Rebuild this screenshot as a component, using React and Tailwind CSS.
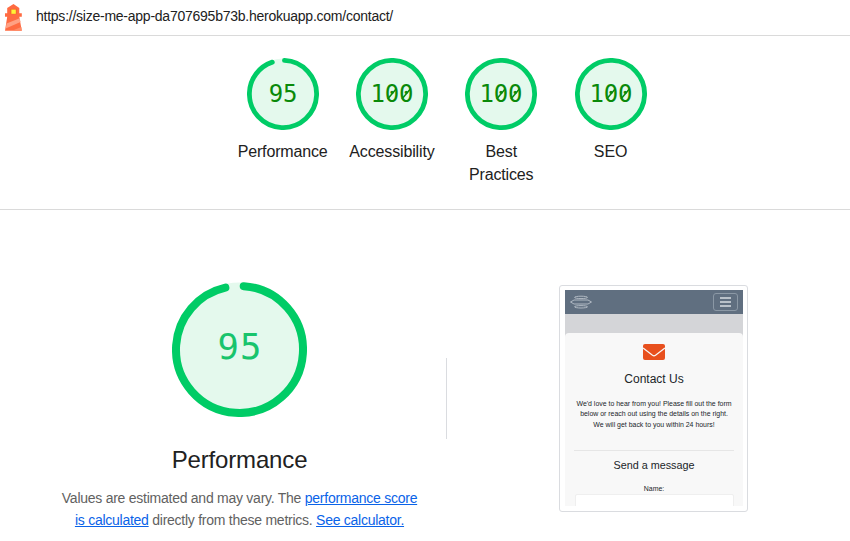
import React from "react";

function Gauge({ score, size, stroke, fontSize, color, baseline, spacing, start, sweep }) {
  const c = size / 2;
  const r = c - stroke / 2;
  const len = 2 * Math.PI * r;
  const full = score === 100;
  const arc = full ? len : len * sweep;
  const adv = fontSize * 0.602 + spacing;
  return (
    <svg width={size} height={size} viewBox={`0 0 ${size} ${size}`} className="block shrink-0">
      <circle cx={c} cy={c} r={c - 0.4} fill="#e4f9ed" />
      <circle
        cx={c}
        cy={c}
        r={r}
        fill="none"
        stroke="#00cc66"
        strokeWidth={stroke}
        strokeLinecap={full ? "butt" : "round"}
        strokeDasharray={full ? undefined : `${arc} ${len}`}
        transform={`rotate(${start} ${c} ${c})`}
      />
      <text
        x={c + spacing / 2}
        y={baseline}
        textAnchor="middle"
        fill={color}
        fontSize={fontSize}
        letterSpacing={spacing}
        fontFamily="'DejaVu Sans Mono', monospace"
      >
        {score}
      </text>
      {full &&
        [0, adv].map((dx) => (
          <line
            key={dx}
            x1={c + dx - 4.3}
            y1={baseline - 3.4}
            x2={c + dx + 4.3}
            y2={baseline - 13.6}
            stroke={color}
            strokeWidth="1.5"
          />
        ))}
    </svg>
  );
}

function SmallGauge({ score, label }) {
  return (
    <div className="flex w-[109.3px] flex-col items-center">
      <Gauge score={score} size={72} stroke={4.8} fontSize={24} color="#0a8a0a" baseline={44.3} spacing={-0.2} start={-87.5} sweep={0.94} />
      <div className="mt-[10px] w-[92px] text-center text-[16px] leading-[23px] tracking-[-0.15px] whitespace-nowrap">{label}</div>
    </div>
  );
}

function Lighthouse() {
  return (
    <svg width="18" height="28" viewBox="0 0 18 28" className="block shrink-0">
      <path d="M9.5 0 L15.3 4 V9.2 H17.8 V12.8 H15.3 L17.8 26.8 H1 L3.2 12.8 H1 V9.2 H3.2 V4Z" fill="#ff6b42" />
      <path d="M2.6 19.6 L15.7 14.2 L16.5 18 L1.7 24.5Z" fill="#ffa184" />
      <path d="M8 26.8 L17.3 23 L17.8 26.8Z" fill="#ff8c69" />
      <rect x="6.2" y="4.8" width="6.6" height="5.4" fill="#f2682c" />
      <rect x="7.4" y="5.6" width="4.4" height="4.2" fill="#fff236" />
    </svg>
  );
}

function Preview() {
  return (
    <div className="mt-[75px] h-[227px] w-[189px] rounded-[3px] border border-[#dadce0] px-[5px] pt-[4px]">
      <div className="flex h-[216px] w-[178px] flex-col overflow-hidden bg-[#d4d5d8]">
        <div className="flex h-[24px] shrink-0 items-center justify-between bg-[#606f80] pr-[5px] pl-[5px]">
          <svg width="22" height="14" viewBox="0 0 22 14" fill="none" stroke="#b9c1c9" strokeWidth="0.9">
            <ellipse cx="11" cy="2.4" rx="6.5" ry="1.2" />
            <path d="M0.5 7 L4 5 H18 L21.5 7 L18 9 H4Z" />
            <ellipse cx="11" cy="11.8" rx="6.5" ry="1.2" />
          </svg>
          <div className="flex h-[18px] w-[25px] flex-col items-center justify-center gap-[2.5px] rounded-[3px] border border-[#8b98a5]">
            <div className="h-[1.5px] w-[11px] bg-[#b9c1c9]" />
            <div className="h-[1.5px] w-[11px] bg-[#b9c1c9]" />
            <div className="h-[1.5px] w-[11px] bg-[#b9c1c9]" />
          </div>
        </div>
        <div className="mt-[19px] flex h-[173px] flex-col items-center rounded-t-[4px] bg-[#f8f8f8] text-center text-[#212529]">
          <svg width="22" height="16" viewBox="0 0 22 16" className="mt-[11px] block shrink-0">
            <rect width="22" height="16" rx="2" fill="#e8501e" />
            <path d="M0 4 L9.5 11.3 Q11 12.4 12.5 11.3 L22 4" fill="none" stroke="#f8f8f8" strokeWidth="1.3" />
          </svg>
          <div className="mt-[11px] text-[12px] leading-[16px]">Contact Us</div>
          <div className="mt-[12px] text-[6.95px] leading-[10.3px] whitespace-nowrap">
            We'd love to hear from you! Please fill out the form
            <br />
            below or reach out using the details on the right.
            <br />
            We will get back to you within 24 hours!
          </div>
          <div className="mt-[20px] h-px w-[160px] shrink-0 bg-[#e6e6e6]" />
          <div className="mt-[7px] text-[10.8px] leading-[14px]">Send a message</div>
          <div className="mt-[12px] text-[6.95px] leading-[9px]">Name:</div>
          <div className="mt-px h-[20px] w-[159px] shrink-0 rounded-[2px] border border-[#efefef] bg-white" />
        </div>
      </div>
    </div>
  );
}

export default function App() {
  return (
    <div className="h-[541px] w-[850px] overflow-hidden bg-white font-['Liberation_Sans',Arial,sans-serif] text-[#212121]">
      <header className="flex h-[36px] border-b border-[#dadada] pt-[4px] pl-[4px]">
        <Lighthouse />
        <div className="mt-[3px] ml-[14px] text-[14px] leading-[18px] tracking-[-0.245px]">
          https://size-me-app-da707695b73b.herokuapp.com/contact/
        </div>
      </header>
      <section className="flex h-[174px] border-b border-[#dadada] pt-[22px] pl-[228px]">
        <SmallGauge score={95} label="Performance" />
        <SmallGauge score={100} label="Accessibility" />
        <SmallGauge score={100} label={<>Best<br />Practices</>} />
        <SmallGauge score={100} label="SEO" />
      </section>
      <main className="flex">
        <div className="flex w-[446px] flex-col items-center pl-[33px]">
          <div className="mt-[72px]">
            <Gauge score={95} size={135} stroke={8} fontSize={35.6} color="#18c46c" baseline={77} spacing={1} start={-86.2} sweep={0.952} />
          </div>
          <h1 className="mt-[27px] text-[24px] leading-[32px] tracking-[-0.15px]">Performance</h1>
          <p className="mt-[11px] text-center text-[14px] leading-[22px] tracking-[-0.255px] whitespace-nowrap text-[#616161]">
            Values are estimated and may vary. The{" "}
            <a className="text-[#0a63e8] underline">performance score</a>
            <br />
            <a className="text-[#0a63e8] underline">is calculated</a> directly from these metrics.{" "}
            <a className="text-[#0a63e8] underline">See calculator.</a>
          </p>
        </div>
        <div className="mt-[148px] mr-[112px] h-[81px] w-px bg-[#dadce0]" />
        <Preview />
      </main>
    </div>
  );
}
